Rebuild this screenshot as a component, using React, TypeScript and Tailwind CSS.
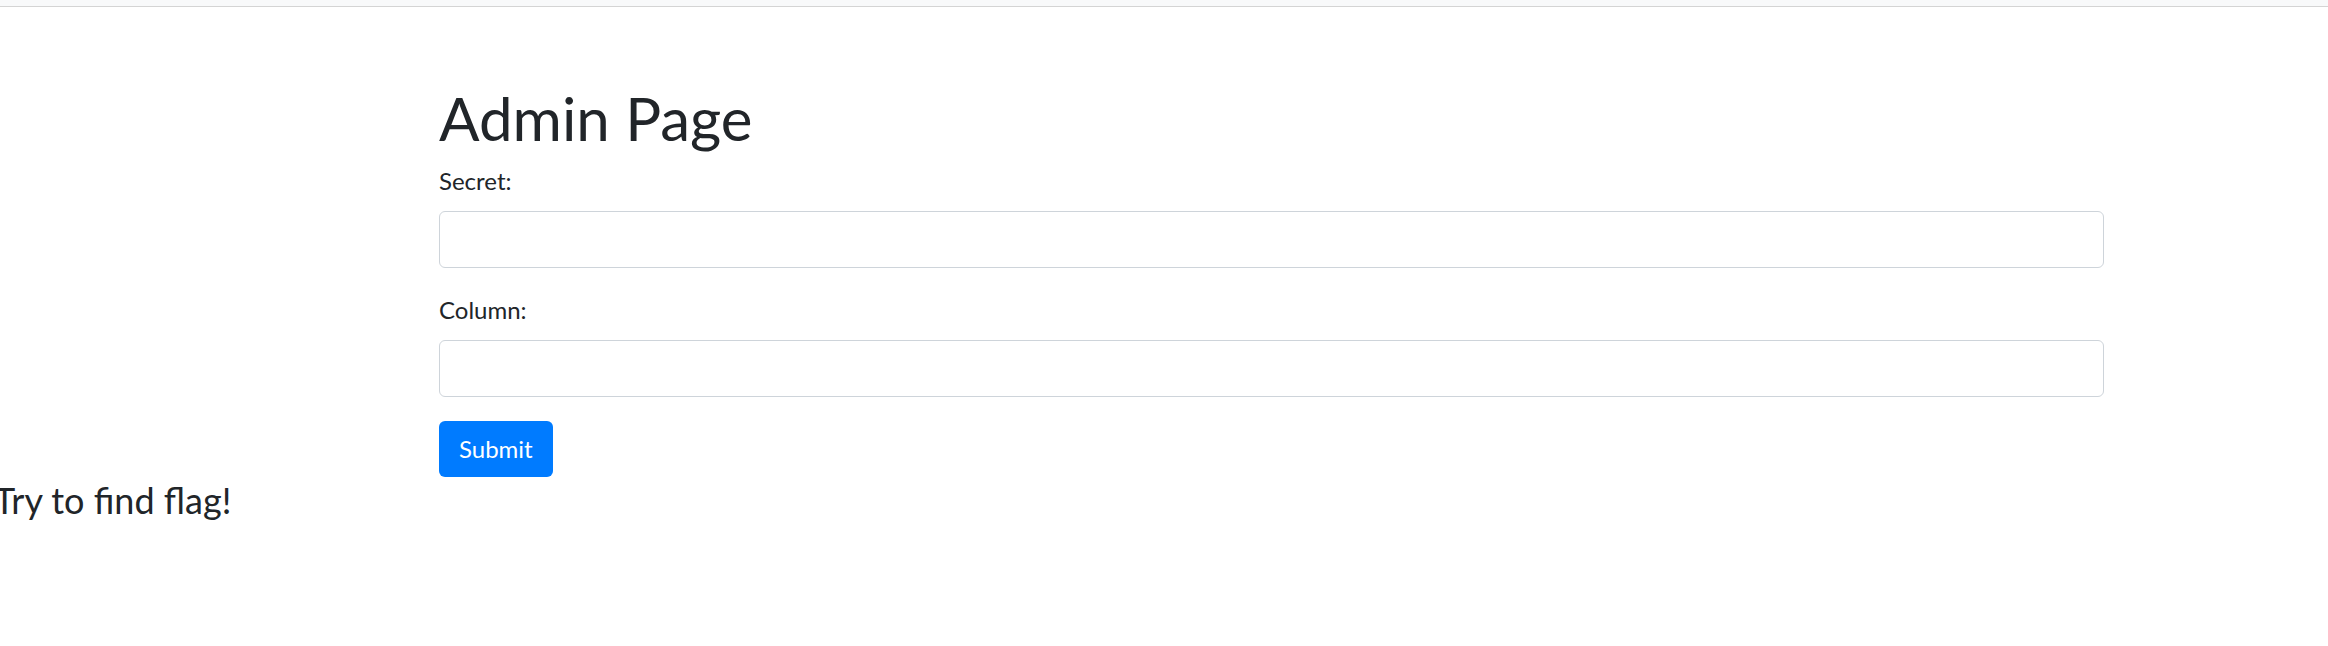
export default function App() {
  return (
    <div className="min-h-screen bg-white font-['Lato',sans-serif] text-[#212529] overflow-hidden">
      <div className="h-[7px] bg-[#f8f9fa] border-b border-[#d4d4d4]" />

      <div className="ml-[439px] w-[1665px] pt-[75px]">
        <h1 className="text-[60px] leading-[72px] mb-[9px] font-normal">Admin Page</h1>

        <form onSubmit={(e) => e.preventDefault()}>
          <div className="mb-[24px]">
            <label className="block text-[24px] leading-[36px] mb-[12px]">Secret:</label>
            <input
              type="text"
              className="block w-full h-[57px] px-[18px] border border-[#ced4da] rounded-[6px] text-[24px] outline-none"
            />
          </div>
          <div className="mb-[24px]">
            <label className="block text-[24px] leading-[36px] mb-[12px]">Column:</label>
            <input
              type="text"
              className="block w-full h-[57px] px-[18px] border border-[#ced4da] rounded-[6px] text-[24px] outline-none"
            />
          </div>
          <button
            type="submit"
            className="h-[56px] px-[20px] rounded-[6px] bg-[#007bff] text-white text-[24px] leading-[36px]"
          >
            Submit
          </button>
        </form>
      </div>

      <p className="-ml-[6px] -mt-[4px] text-[36px] leading-[54px]">Try to find flag!</p>
    </div>
  )
}
